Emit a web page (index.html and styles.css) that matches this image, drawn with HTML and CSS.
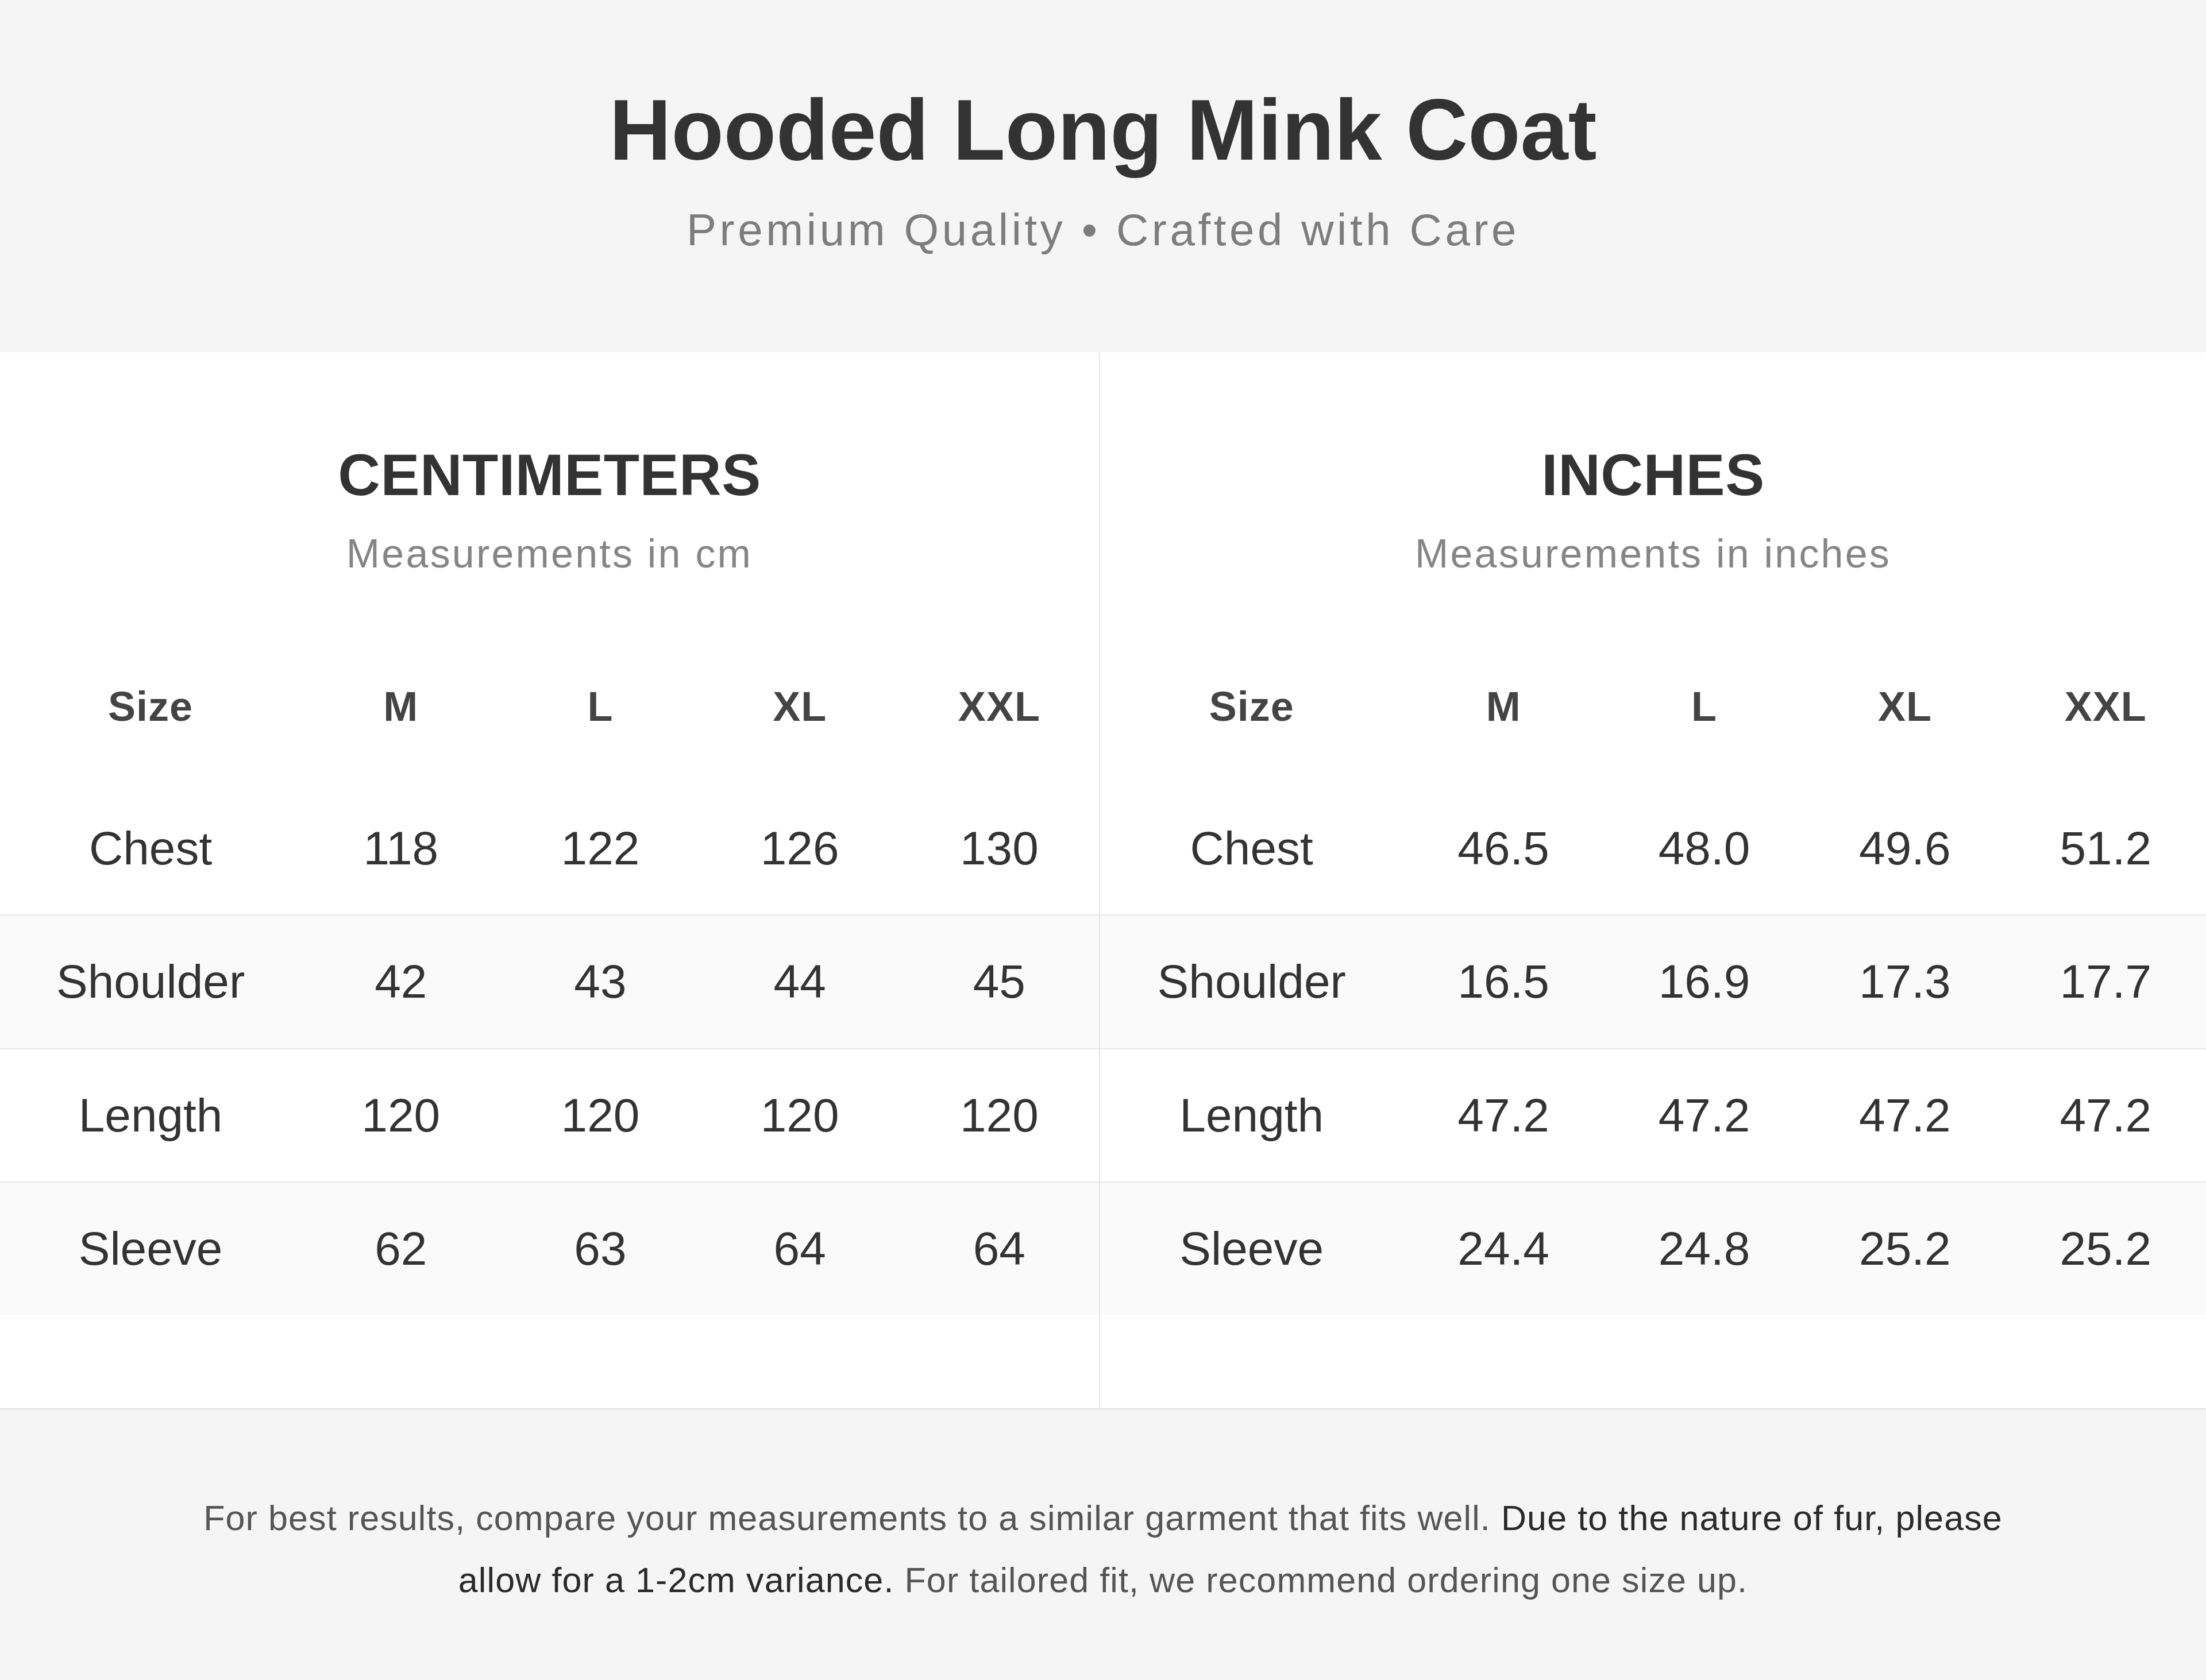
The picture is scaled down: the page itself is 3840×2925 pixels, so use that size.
FILE: index.html
```html
<!DOCTYPE html>
<html lang="en">
<head>
<meta charset="utf-8">
<title>Hooded Long Mink Coat – Size Chart</title>
<link rel="stylesheet" href="styles.css">
</head>
<body>
<div class="page">
  <header class="hero">
    <h1 class="title">Hooded Long Mink Coat</h1>
    <p class="tagline">Premium Quality • Crafted with Care</p>
  </header>

  <main class="charts">
    <section class="chart chart-cm">
      <div class="chart-head">
        <h2 class="chart-title">CENTIMETERS</h2>
        <p class="chart-sub">Measurements in cm</p>
      </div>
      <table class="size-table">
        <colgroup><col class="c-first"><col><col><col><col></colgroup>
        <thead>
          <tr><th>Size</th><th>M</th><th>L</th><th>XL</th><th>XXL</th></tr>
        </thead>
        <tbody>
          <tr><td>Chest</td><td>118</td><td>122</td><td>126</td><td>130</td></tr>
          <tr><td>Shoulder</td><td>42</td><td>43</td><td>44</td><td>45</td></tr>
          <tr><td>Length</td><td>120</td><td>120</td><td>120</td><td>120</td></tr>
          <tr><td>Sleeve</td><td>62</td><td>63</td><td>64</td><td>64</td></tr>
        </tbody>
      </table>
    </section>

    <section class="chart chart-in">
      <div class="chart-head">
        <h2 class="chart-title">INCHES</h2>
        <p class="chart-sub">Measurements in inches</p>
      </div>
      <table class="size-table">
        <colgroup><col class="c-first"><col><col><col><col></colgroup>
        <thead>
          <tr><th>Size</th><th>M</th><th>L</th><th>XL</th><th>XXL</th></tr>
        </thead>
        <tbody>
          <tr><td>Chest</td><td>46.5</td><td>48.0</td><td>49.6</td><td>51.2</td></tr>
          <tr><td>Shoulder</td><td>16.5</td><td>16.9</td><td>17.3</td><td>17.7</td></tr>
          <tr><td>Length</td><td>47.2</td><td>47.2</td><td>47.2</td><td>47.2</td></tr>
          <tr><td>Sleeve</td><td>24.4</td><td>24.8</td><td>25.2</td><td>25.2</td></tr>
        </tbody>
      </table>
    </section>
  </main>

  <footer class="note">
    <p class="note-text">For best results, compare your measurements to a similar garment that fits well. <span class="note-em">Due to the nature of fur, please allow for a 1-2cm variance.</span> For tailored fit, we recommend ordering one size up.</p>
  </footer>
</div>
</body>
</html>
```

FILE: styles.css
```css
* {
  box-sizing: border-box;
}

html, body {
  margin: 0;
  padding: 0;
}

body {
  background: #f5f5f5;
  font-family: "Liberation Sans", Arial, Helvetica, sans-serif;
  color: #333;
}

.page {
  width: 3840px;
  min-height: 2925px;
  display: flex;
  flex-direction: column;
}

/* ---------- header ---------- */
.hero {
  background: #f5f5f5;
  text-align: center;
  padding: 137px 0 165px;
}

.title {
  margin: 0;
  font-size: 149.5px;
  line-height: 1.2;
  font-weight: 700;
  color: #333;
}

.tagline {
  margin: 38px 0 0;
  font-size: 78px;
  line-height: 1.2;
  letter-spacing: 5.6px;
  color: #7d7d7d;
}

/* ---------- charts ---------- */
.charts {
  display: grid;
  grid-template-columns: 1915px 1fr;
  background: #fff;
  border-bottom: 2px solid #e2e2e2;
}

.chart {
  padding: 153px 0 163px;
}

.chart-cm {
  border-right: 2px solid #e4e4e4;
}

.chart-head {
  text-align: center;
}

.chart-title {
  margin: 0;
  font-size: 102px;
  line-height: 1.2;
  font-weight: 700;
  color: #333;
  letter-spacing: 0.5px;
}

.chart-sub {
  margin: 34px 0 0;
  font-size: 70px;
  line-height: 1.2;
  letter-spacing: 3.2px;
  color: #858585;
}

.size-table {
  width: 100%;
  margin-top: 93px;
  border-collapse: collapse;
  table-layout: fixed;
  text-align: center;
}

.c-first {
  width: 27.4%;
}

.size-table th {
  font-size: 72px;
  line-height: 1.2;
  font-weight: 700;
  letter-spacing: 1px;
  color: #444;
  padding: 88px 0;
}

.size-table td {
  font-size: 82px;
  line-height: 1.2;
  color: #333;
  padding: 66px 0;
}

.size-table tbody tr + tr {
  border-top: 2px solid #e8e8e8;
}

.size-table tbody tr:nth-child(even) {
  background: #fafafa;
}

/* ---------- note ---------- */
.note {
  flex: 1;
  background: #f5f5f5;
  padding: 135px 0 117px;
  display: flex;
  justify-content: center;
}

.note-text {
  margin: 0;
  max-width: 3230px;
  text-align: center;
  font-size: 61px;
  line-height: 108px;
  letter-spacing: 1.1px;
  color: #555;
}

.note-em {
  color: #2a2a2a;
}
```
